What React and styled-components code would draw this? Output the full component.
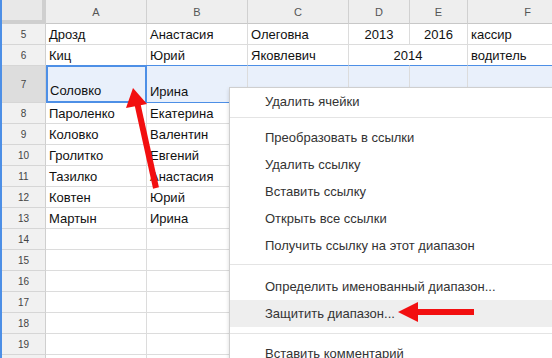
import React from 'react';
import styled, { createGlobalStyle } from 'styled-components';

const GlobalStyle = createGlobalStyle`
  html, body { margin: 0; padding: 0; background: #fff; }
  body { font-family: Arial, "Liberation Sans", sans-serif; overflow: hidden; }
`;

const Page = styled.div`
  position: relative;
  width: 552px;
  height: 358px;
  overflow: hidden;
  border-left: 2px solid #4d8fe6;
  box-sizing: border-box;
`;

const Grid = styled.div`
  display: grid;
  grid-template-columns: 44px 101px 101px 101px 61px 58px 120px;
  grid-template-rows: 24px 21px 21px 37px repeat(13, 21px);
`;

const Corner = styled.div`
  background: #e8e8e8;
  border-right: 4px solid #cfcfcf;
  border-bottom: 4px solid #cfcfcf;
  box-sizing: border-box;
`;

const ColHead = styled.div`
  background: #eeeeee;
  border-right: 1px solid #d0d0d0;
  border-bottom: 1px solid #c8c8c8;
  box-sizing: border-box;
  font-size: 11px;
  color: #555;
  display: flex;
  align-items: center;
  justify-content: center;
`;

const RowHead = styled.div`
  background: ${p => (p.$active ? '#dddddd' : '#f1f1f1')};
  border-right: 1px solid #cfcfcf;
  border-bottom: 1px solid #d6d6d6;
  box-sizing: border-box;
  font-size: 10px;
  color: #444;
  display: flex;
  align-items: center;
  justify-content: center;
`;

const Cell = styled.div`
  grid-column: span ${p => p.$span || 1};
  background: ${p => (p.$sel ? '#e9f0fb' : '#fff')};
  border-right: 1px solid #dcdcdc;
  border-bottom: 1px solid #dcdcdc;
  box-sizing: border-box;
  font-size: 13px;
  color: #111;
  padding: 0 3px;
  display: flex;
  align-items: ${p => (p.$bottom ? 'flex-end' : 'center')};
  justify-content: ${p => (p.$center ? 'center' : 'flex-start')};
  padding-bottom: ${p => (p.$bottom ? '3px' : '0')};
  white-space: nowrap;
  overflow: hidden;
  ${p => p.$sel && 'border-top: 1px solid #4d8fe6; border-bottom: 1px solid #4d8fe6; margin-top: -1px;'}
  ${p => p.$active && 'border: 2px solid #4d8fe6; padding-left: 2px;'}
`;

const Menu = styled.div`
  position: absolute;
  left: 227px;
  top: 87px;
  width: 340px;
  height: 290px;
  background: #fff;
  border: 1px solid #cfcfcf;
  box-shadow: 0 2px 4px rgba(0, 0, 0, 0.15);
  padding-top: 0;
  font-size: 13px;
  color: #333;
`;

const Item = styled.div`
  height: 27px;
  line-height: 27px;
  padding-left: 35px;
  background: ${p => (p.$hover ? '#eeeeee' : 'transparent')};
  white-space: nowrap;
`;

const Sep = styled.div`
  height: 1px;
  background: #e4e4e4;
  margin: ${p => p.$m || '6px 0'};
`;

const Arrows = styled.svg`
  position: absolute;
  left: -2px;
  top: 0;
  pointer-events: none;
`;

const rows = [
  { n: 5, c: ['Дрозд', 'Анастасия', 'Олеговна', '2013', '2016', 'кассир'] },
  { n: 6, c: ['Киц', 'Юрий', 'Яковлевич', '2014', null, 'водитель'] },
  { n: 7, c: ['Соловко', 'Ирина', '', '', '', 'заместитель'], sel: true },
  { n: 8, c: ['Пароленко', 'Екатерина'] },
  { n: 9, c: ['Коловко', 'Валентин'] },
  { n: 10, c: ['Гролитко', 'Евгений'] },
  { n: 11, c: ['Тазилко', 'Анастасия'] },
  { n: 12, c: ['Ковтен', 'Юрий'] },
  { n: 13, c: ['Мартын', 'Ирина'] },
  { n: 14, c: [] },
  { n: 15, c: [] },
  { n: 16, c: [] },
  { n: 17, c: [] },
  { n: 18, c: [] },
  { n: 19, c: [] },
  { n: 20, c: [] },
];

const renderRow = (r) => {
  const out = [<RowHead key={'h' + r.n} $active={r.sel}>{r.n}</RowHead>];
  for (let i = 0; i < 6; i++) {
    const v = r.c[i];
    if (v === null) continue;
    const span = r.n === 6 && i === 3 ? 2 : 1;
    out.push(
      <Cell
        key={r.n + '-' + i}
        $span={span}
        $center={i === 3 || i === 4}
        $sel={r.sel}
        $active={r.sel && i === 0}
        $bottom={r.sel}
      >
        {v || ''}
      </Cell>
    );
  }
  return out;
};

const App = () => {
  return (
    <>
      <GlobalStyle />
      <Page>
        <Grid>
          <Corner />
          {['A', 'B', 'C', 'D', 'E', 'F'].map(l => <ColHead key={l}>{l}</ColHead>)}
          {rows.map(renderRow)}
        </Grid>
        <Menu>
          <Item>Удалить ячейки</Item>
          <Sep $m="2px 0 6px" />
          <Item>Преобразовать в ссылки</Item>
          <Item>Удалить ссылку</Item>
          <Item>Вставить ссылку</Item>
          <Item>Открыть все ссылки</Item>
          <Item>Получить ссылку на этот диапазон</Item>
          <Sep $m="5px 0 8px" />
          <Item>Определить именованный диапазон...</Item>
          <Item $hover>Защитить диапазон...</Item>
          <Sep $m="6px 0 6px" />
          <Item>Вставить комментарий</Item>
        </Menu>
        <Arrows width="552" height="358">
          <line x1="156" y1="188" x2="137" y2="102" stroke="#f20f10" strokeWidth="6" />
          <polygon points="133,88 126,108 147,104" fill="#f20f10" />
          <line x1="474" y1="312" x2="414" y2="312" stroke="#f20f10" strokeWidth="6" />
          <polygon points="398,312 418,302 418,322" fill="#f20f10" />
        </Arrows>
      </Page>
    </>
  );
};

export default App;
